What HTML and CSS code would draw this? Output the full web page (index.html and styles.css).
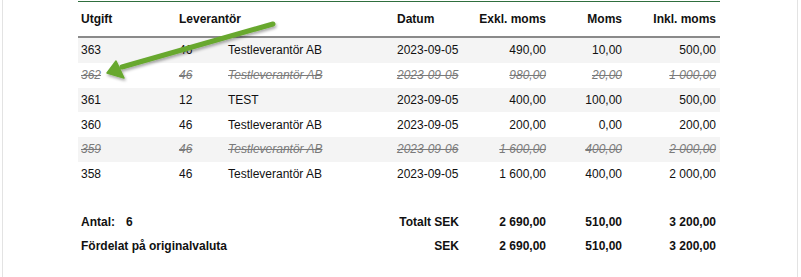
FILE: index.html
```html
<!DOCTYPE html>
<html lang="sv">
<head>
<meta charset="utf-8">
<link rel="stylesheet" href="styles.css">
</head>
<body>
<div class="frame">
  <div class="wrap">
    <table class="list">
      <colgroup>
        <col class="c1"><col class="c2"><col class="c3"><col class="c4"><col class="c5"><col class="c6"><col class="c7">
      </colgroup>
      <thead>
        <tr>
          <th>Utgift</th>
          <th colspan="2">Leverantör</th>
          <th>Datum</th>
          <th class="r">Exkl. moms</th>
          <th class="r">Moms</th>
          <th class="r">Inkl. moms</th>
        </tr>
      </thead>
      <tbody>
        <tr class="alt"><td>363</td><td>46</td><td>Testleverantör AB</td><td>2023-09-05</td><td class="r">490,00</td><td class="r">10,00</td><td class="r">500,00</td></tr>
        <tr class="void"><td>362</td><td>46</td><td>Testleverantör AB</td><td>2023-09-05</td><td class="r">980,00</td><td class="r">20,00</td><td class="r">1 000,00</td></tr>
        <tr class="alt"><td>361</td><td>12</td><td>TEST</td><td>2023-09-05</td><td class="r">400,00</td><td class="r">100,00</td><td class="r">500,00</td></tr>
        <tr><td>360</td><td>46</td><td>Testleverantör AB</td><td>2023-09-05</td><td class="r">200,00</td><td class="r">0,00</td><td class="r">200,00</td></tr>
        <tr class="alt void"><td>359</td><td>46</td><td>Testleverantör AB</td><td>2023-09-06</td><td class="r">1 600,00</td><td class="r">400,00</td><td class="r">2 000,00</td></tr>
        <tr><td>358</td><td>46</td><td>Testleverantör AB</td><td>2023-09-05</td><td class="r">1 600,00</td><td class="r">400,00</td><td class="r">2 000,00</td></tr>
      </tbody>
      <tfoot>
        <tr class="spacer"><td colspan="7"></td></tr>
        <tr class="sum"><td colspan="3">Antal:<span class="count">6</span></td><td class="r">Totalt SEK</td><td class="r">2 690,00</td><td class="r">510,00</td><td class="r">3 200,00</td></tr>
        <tr class="sum"><td colspan="3">Fördelat på originalvaluta</td><td class="r">SEK</td><td class="r">2 690,00</td><td class="r">510,00</td><td class="r">3 200,00</td></tr>
      </tfoot>
    </table>
    <svg class="arrow" width="801" height="277" viewBox="0 0 801 277">
      <defs>
        <filter id="sh" x="-20%" y="-50%" width="140%" height="200%">
          <feGaussianBlur in="SourceAlpha" stdDeviation="1.5"/>
          <feOffset dx="1" dy="2"/>
          <feComponentTransfer><feFuncA type="linear" slope="0.35"/></feComponentTransfer>
          <feMerge><feMergeNode/><feMergeNode in="SourceGraphic"/></feMerge>
        </filter>
      </defs>
      <g filter="url(#sh)">
        <line x1="273" y1="24" x2="122" y2="67" stroke="#67a82f" stroke-width="5" stroke-linecap="round"/>
        <polygon points="107,73 116,61 124,78" fill="#67a82f" stroke="#67a82f" stroke-width="1.5" stroke-linejoin="round"/>
      </g>
    </svg>
  </div>
</div>
</body>
</html>
```

FILE: styles.css
```css
html, body {
  margin: 0;
  padding: 0;
  background: #fff;
}
body {
  font-family: "Liberation Sans", Arial, sans-serif;
  font-size: 12px;
  color: #111;
}
.frame {
  margin-left: 2px;
  width: 794px;
  height: 277px;
  border-left: 1px solid #e3e3e3;
  border-right: 1px solid #e3e3e3;
}
.wrap {
  padding: 1px 0 0 75px;
}
.list {
  border-collapse: collapse;
  table-layout: fixed;
  width: 642px;
}
.c1 { width: 98px; }
.c2 { width: 49px; }
.c3 { width: 169px; }
.c4 { width: 69px; }
.c5 { width: 87px; }
.c6 { width: 76px; }
.c7 { width: 94px; }
.list thead tr {
  border-top: 1px solid #2f6f3e;
  border-bottom: 2px solid #8a8a8a;
}
.list th {
  height: 34px;
  padding: 0 4px 0 3px;
  text-align: left;
  font-weight: bold;
  vertical-align: middle;
  white-space: nowrap;
}
.list td {
  height: 24.75px;
  padding: 0 4px 0 3px;
  vertical-align: middle;
  white-space: nowrap;
}
.list .r {
  text-align: right;
}
.alt td {
  background: #f4f4f4;
}
.void td {
  color: #7a7a7a;
  font-style: italic;
  text-decoration: line-through;
}
.spacer td {
  height: 23.5px;
}
.sum td {
  font-weight: bold;
  height: 24px;
}
.count {
  margin-left: 11px;
}
.arrow {
  position: absolute;
  left: 0;
  top: 0;
  pointer-events: none;
}
```
